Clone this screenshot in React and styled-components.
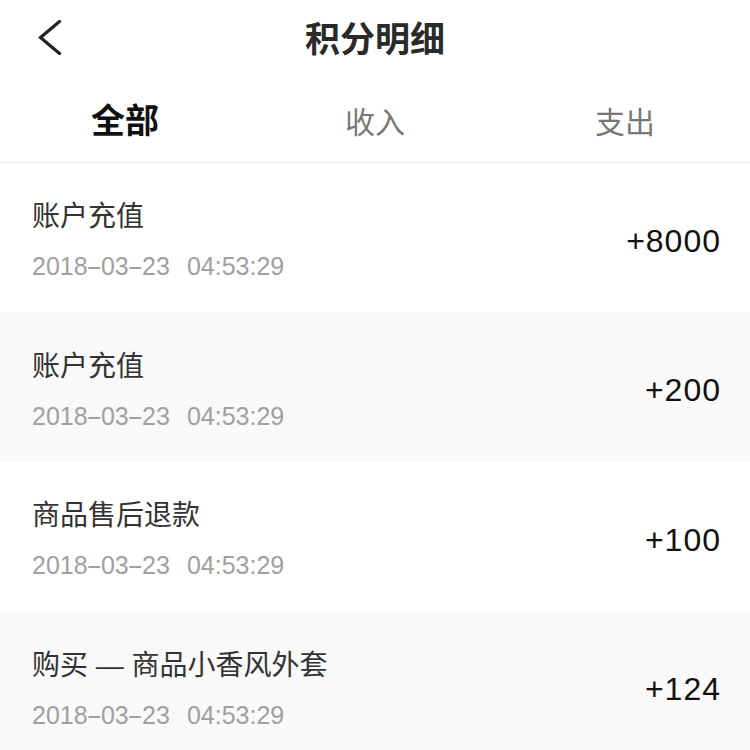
import React, { useState } from 'react';
import styled, { createGlobalStyle } from 'styled-components';

const records = [
  { title: '账户充值', date: '2018-03-23', clock: '04:53:29', amount: '+8000' },
  { title: '账户充值', date: '2018-03-23', clock: '04:53:29', amount: '+200' },
  { title: '商品售后退款', date: '2018-03-23', clock: '04:53:29', amount: '+100' },
  { title: '购买 — 商品小香风外套', date: '2018-03-23', clock: '04:53:29', amount: '+124' },
];

const tabs = ['全部', '收入', '支出'];

const GlobalStyle = createGlobalStyle`
  html, body {
    margin: 0;
    padding: 0;
    background: #fff;
  }
  body {
    font-family: "Liberation Sans", "Noto Sans CJK SC", sans-serif;
    -webkit-font-smoothing: antialiased;
  }
`;

const Page = styled.div`
  width: 750px;
  height: 750px;
  overflow: hidden;
  background: #fff;
`;

const Header = styled.header`
  height: 80px;
  display: grid;
  grid-template-columns: 1fr auto 1fr;
  align-items: center;
`;

const BackButton = styled.button`
  justify-self: start;
  margin-left: 36px;
  padding: 0;
  border: none;
  background: none;
  display: flex;
  cursor: pointer;
`;

const Title = styled.h1`
  margin: 0;
  font-size: 35px;
  line-height: 40px;
  font-weight: 700;
  color: #2a2a2a;
`;

const TabBar = styled.nav`
  height: 82px;
  display: grid;
  grid-template-columns: repeat(3, 1fr);
  align-items: center;
  border-bottom: 1px solid #ededed;
`;

const Tab = styled.div`
  text-align: center;
  font-size: ${p => (p.$active ? '34px' : '30px')};
  font-weight: ${p => (p.$active ? 700 : 400)};
  color: ${p => (p.$active ? '#111' : '#777')};
  line-height: 40px;
  margin-top: ${p => (p.$active ? '0' : '4px')};
  cursor: pointer;
`;

const List = styled.div`
  display: flex;
  flex-direction: column;
`;

const Row = styled.div`
  height: 149.5px;
  flex-shrink: 0;
  display: flex;
  align-items: center;
  justify-content: space-between;
  padding: 0 29px 0 32px;
  background: ${p => (p.$shaded ? '#f9f9f9' : '#fff')};
`;

const Info = styled.div`
  display: flex;
  flex-direction: column;
  gap: 17px;
  margin-top: 6px;
`;

const RowTitle = styled.div`
  font-size: 28px;
  line-height: 34px;
  color: #333;
`;

const RowTime = styled.div`
  display: flex;
  gap: 17px;
  font-size: 25px;
  line-height: 30px;
  color: #a0a0a0;
`;

/* the reference font draws a wide hyphen; stretch Arial's narrow one */
const Dash = styled.span`
  display: inline-block;
  margin: 0 2.5px;
  transform: scaleX(1.9);
`;

const Amount = styled.div`
  font-size: 32px;
  line-height: 36px;
  letter-spacing: 1px;
  color: #111;
  margin-top: 6px;
`;

const ChevronLeft = () => (
  <svg width="28" height="40" viewBox="0 0 28 40" fill="none">
    <polyline
      points="23.5,1.5 4.5,17.5 23.5,33.5"
      stroke="#222"
      strokeWidth="3.2"
      strokeLinecap="round"
      strokeLinejoin="miter"
    />
  </svg>
);

const DateText = ({ value }) => {
  const parts = value.split('-');
  return (
    <span>
      {parts.map((p, i) => (
        <React.Fragment key={i}>
          {i > 0 && <Dash>-</Dash>}
          {p}
        </React.Fragment>
      ))}
    </span>
  );
};

const App = () => {
  const [active, setActive] = useState(0);

  return (
    <Page>
      <GlobalStyle />
      <Header>
        <BackButton aria-label="返回">
          <ChevronLeft />
        </BackButton>
        <Title>积分明细</Title>
        <div />
      </Header>
      <TabBar>
        {tabs.map((t, i) => (
          <Tab key={t} $active={i === active} onClick={() => setActive(i)}>
            {t}
          </Tab>
        ))}
      </TabBar>
      <List>
        {records.map((r, i) => (
          <Row key={i} $shaded={i % 2 === 1}>
            <Info>
              <RowTitle>{r.title}</RowTitle>
              <RowTime>
                <DateText value={r.date} />
                <span>{r.clock}</span>
              </RowTime>
            </Info>
            <Amount>{r.amount}</Amount>
          </Row>
        ))}
      </List>
    </Page>
  );
};

export default App;
